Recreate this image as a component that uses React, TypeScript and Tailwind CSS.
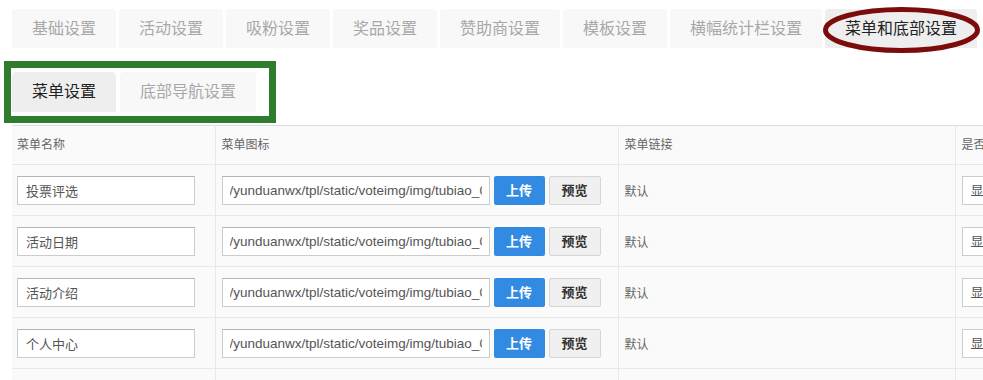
import React from "react";

const topTabs = [
  "基础设置",
  "活动设置",
  "吸粉设置",
  "奖品设置",
  "赞助商设置",
  "模板设置",
  "横幅统计栏设置",
  "菜单和底部设置",
];

const menus = [
  { name: "投票评选", icon: "/yunduanwx/tpl/static/voteimg/img/tubiao_01.png" },
  { name: "活动日期", icon: "/yunduanwx/tpl/static/voteimg/img/tubiao_02.png" },
  { name: "活动介绍", icon: "/yunduanwx/tpl/static/voteimg/img/tubiao_03.png" },
  { name: "个人中心", icon: "/yunduanwx/tpl/static/voteimg/img/tubiao_04.png" },
  { name: "", icon: "/yunduanwx/tpl/static/voteimg/img/tubiao_05.png" },
];

function MenuRow({ name, icon }: { name: string; icon: string }) {
  return (
    <tr className="h-[51px] border-b border-[#e8e8e8]">
      <td className="border-r border-[#e8e8e8] pl-[5px] align-top pt-[11px]">
        <input
          readOnly
          value={name}
          className="h-[29px] w-[178px] border border-[#ccc] border-t-[#b5b5b5] bg-white px-[8px] text-[13px] text-[#555] outline-none"
        />
      </td>
      <td className="border-r border-[#e8e8e8] pl-[6px] align-top pt-[11px]">
        <div className="flex gap-[4px]">
          <input
            readOnly
            value={icon}
            className="h-[29px] w-[268px] border border-[#ccc] border-t-[#b5b5b5] bg-white px-[7px] text-[13.5px] text-[#555] outline-none"
          />
          <button className="h-[29px] w-[51px] rounded-[2px] bg-[#338ae2] text-[13px] font-bold text-white">
            上传
          </button>
          <button className="h-[29px] w-[52px] rounded-[2px] border border-[#d6d6d6] bg-[#f0f0f0] text-[13px] font-bold text-[#333]">
            预览
          </button>
        </div>
      </td>
      <td className="border-r border-[#e8e8e8] pl-[6px] pt-[4px] text-[12px] text-[#666]">
        默认
      </td>
      <td className="pl-[6px] align-top pt-[11px]">
        <div className="flex h-[29px] w-[80px] items-center border border-[#ccc] bg-white px-[8px] text-[13px] text-[#555]">
          显示
        </div>
      </td>
    </tr>
  );
}

export default function App() {
  return (
    <div
      className="relative h-[380px] w-[983px] overflow-hidden bg-white"
      style={{ fontFamily: '"Liberation Sans", "Noto Sans CJK SC", sans-serif' }}
    >
      {/* main tabs */}
      <div className="flex gap-[3px] pl-[12px] pt-[9px]">
        {topTabs.map((t, i) => (
          <div
            key={t}
            className={
              "h-[39px] rounded-t-[4px] px-[20px] text-[16px] leading-[39px] " +
              (i === topTabs.length - 1
                ? "bg-[#eeeeee] text-[#222]"
                : "bg-[#f8f8f8] text-[#a8a8a8]")
            }
          >
            {t}
          </div>
        ))}
      </div>

      {/* sub tabs */}
      <div className="flex gap-[4px] pl-[12px] pt-[24px]">
        <div className="h-[40px] rounded-t-[4px] bg-[#eeeeee] px-[20px] text-[16px] leading-[40px] text-[#222]">
          菜单设置
        </div>
        <div className="h-[40px] rounded-t-[4px] bg-[#f8f8f8] px-[20px] text-[16px] leading-[40px] text-[#a8a8a8]">
          底部导航设置
        </div>
      </div>

      {/* menu table */}
      <div className="ml-[12px] mt-[13px]">
        <table className="w-[1100px] table-fixed border-collapse bg-[#fafafa]">
          <colgroup>
            <col className="w-[203px]" />
            <col className="w-[403px]" />
            <col className="w-[337px]" />
            <col />
          </colgroup>
          <thead>
            <tr className="h-[39px] border-y border-t-[#dcdcdc] border-b-[#e8e8e8] text-left text-[12px] font-normal text-[#666]">
              <th className="border-r border-[#e8e8e8] pl-[5px] font-normal">菜单名称</th>
              <th className="border-r border-[#e8e8e8] pl-[6px] font-normal">菜单图标</th>
              <th className="border-r border-[#e8e8e8] pl-[6px] font-normal">菜单链接</th>
              <th className="pl-[6px] font-normal">是否显示</th>
            </tr>
          </thead>
          <tbody>
            {menus.map((m, i) => (
              <MenuRow key={i} name={m.name} icon={m.icon} />
            ))}
          </tbody>
        </table>
      </div>

      {/* annotations */}
      <svg className="pointer-events-none absolute left-0 top-0" width="983" height="380">
        <ellipse cx="901.5" cy="30" rx="76" ry="20.5" fill="none" stroke="#7c0b0b" strokeWidth="5" />
        <rect x="7.5" y="64.5" width="265" height="55" fill="none" stroke="#2e7d2f" strokeWidth="7" />
      </svg>
    </div>
  );
}
